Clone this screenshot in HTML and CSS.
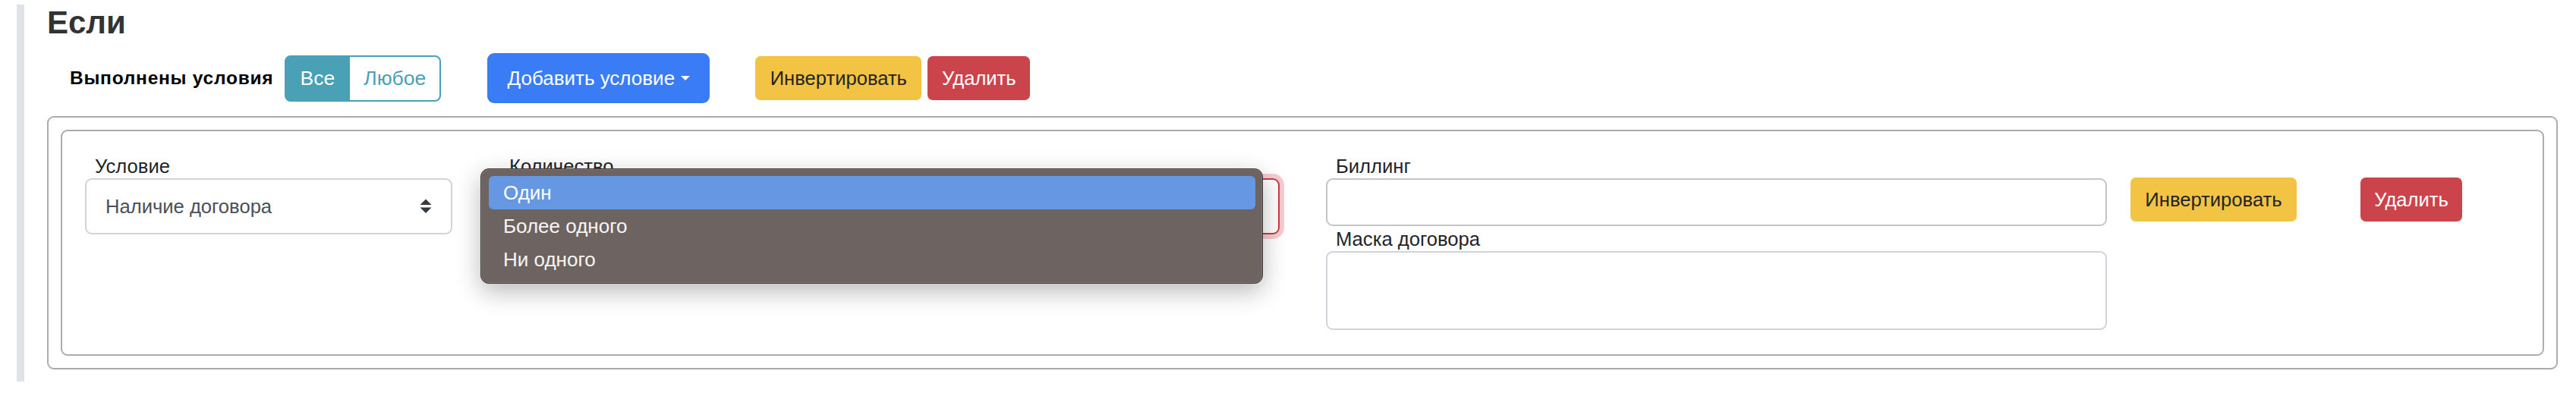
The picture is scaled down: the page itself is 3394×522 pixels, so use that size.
FILE: index.html
```html
<!DOCTYPE html>
<html lang="ru">
<head>
<meta charset="utf-8">
<title>Если</title>
<link rel="stylesheet" href="styles.css">
</head>
<body>
<section class="block">
  <h3 class="title">Если</h3>
  <div class="toolbar">
    <span class="cond-label">Выполнены условия</span>
    <div class="btn-group">
      <button class="btn seg seg-active">Все</button>
      <button class="btn seg seg-outline">Любое</button>
    </div>
    <button class="btn btn-add">Добавить условие<span class="caret"></span></button>
    <button class="btn btn-warn btn-invert top-invert">Инвертировать</button>
    <button class="btn btn-danger btn-delete top-delete">Удалить</button>
  </div>
  <div class="outer-box">
    <div class="inner-box">
      <div class="field col-cond">
        <label class="lbl">Условие</label>
        <div class="select">
          <span class="select-text">Наличие договора</span>
          <svg class="select-arrows" width="16" height="20" viewBox="0 0 16 20"><polygon points="8,0.5 15.5,8 0.5,8" fill="#343a40"/><polygon points="0.5,11.5 15.5,11.5 8,19" fill="#343a40"/></svg>
        </div>
      </div>
      <div class="field col-count">
        <label class="lbl">Количество</label>
        <div class="select select-invalid"></div>
        <div class="popup">
          <div class="popup-item popup-active">Один</div>
          <div class="popup-item">Более одного</div>
          <div class="popup-item">Ни одного</div>
        </div>
      </div>
      <div class="field col-bill">
        <label class="lbl">Биллинг</label>
        <div class="input"></div>
        <label class="lbl lbl-second">Маска договора</label>
        <div class="textarea"></div>
      </div>
      <button class="btn btn-warn btn-invert row-invert">Инвертировать</button>
      <button class="btn btn-danger btn-delete row-delete">Удалить</button>
    </div>
  </div>
</section>
</body>
</html>
```

FILE: styles.css
```css
* { box-sizing: border-box; }

html, body {
  margin: 0;
  padding: 0;
  background: #ffffff;
  font-family: "Liberation Sans", Arial, Helvetica, sans-serif;
  color: #212529;
}

.block {
  margin: 6px 24px 0 22px;
  border-left: 10px solid #dfe2e6;
  padding: 0 0 16px 30px;
}

.title {
  margin: 0;
  font-size: 42px;
  line-height: 48px;
  font-weight: bold;
  color: #333333;
}

.toolbar {
  display: flex;
  align-items: center;
  height: 66px;
  margin-top: 16px;
  margin-bottom: 17px;
}

.cond-label {
  margin-left: 30px;
  font-size: 24.5px;
  font-weight: bold;
  letter-spacing: 0.75px;
  color: #000000;
}

.btn {
  font-family: "Liberation Sans", Arial, Helvetica, sans-serif;
  display: flex;
  align-items: center;
  justify-content: center;
  border: 0;
  margin: 0;
  padding: 0;
  cursor: pointer;
  white-space: nowrap;
}

.btn-group {
  display: flex;
  margin-left: 15px;
  height: 61px;
}

.seg {
  height: 61px;
  font-size: 26.5px;
}

.seg-active {
  width: 86px;
  background: #4aa1b6;
  color: #ffffff;
  border: 2px solid #4aa1b6;
  border-radius: 8px 0 0 8px;
}

.seg-outline {
  width: 120px;
  background: #ffffff;
  color: #4aa1b6;
  border: 2px solid #4aa1b6;
  border-left: 0;
  border-radius: 0 8px 8px 0;
}

.btn-add {
  margin-left: 61px;
  width: 293px;
  height: 66px;
  background: #3a7cf6;
  color: #ffffff;
  font-size: 26px;
  border-radius: 9px;
}

.caret {
  display: inline-block;
  margin-left: 8px;
  width: 0;
  height: 0;
  border-top: 6px solid #ffffff;
  border-left: 6.5px solid transparent;
  border-right: 6.5px solid transparent;
}

.btn-warn {
  background: #f3c343;
  color: #212529;
}

.btn-danger {
  background: #cc444b;
  color: #ffffff;
}

.btn-invert {
  width: 219px;
  height: 58px;
  font-size: 25.6px;
  border-radius: 7px;
}

.btn-delete {
  width: 135px;
  height: 58px;
  font-size: 25.6px;
  border-radius: 7px;
}

.top-invert { margin-left: 60px; }
.top-delete { margin-left: 8px; }

.outer-box {
  border: 2px solid #acacac;
  border-radius: 9px;
  padding: 16px;
}

.inner-box {
  display: flex;
  align-items: flex-start;
  border: 2px solid #acacac;
  border-radius: 9px;
  padding: 31px 0 32px 30px;
}

.field {
  display: flex;
  flex-direction: column;
  position: relative;
}

.col-cond { width: 484px; }
.col-count { width: 1028px; margin-left: 62px; }
.col-bill { width: 1029px; margin-left: 61px; }

.lbl {
  display: block;
  font-size: 25.6px;
  line-height: 30px;
  height: 30px;
  padding-left: 13px;
  margin-bottom: 1px;
  color: #212529;
}

.lbl-second { margin-top: 2px; }

.select {
  height: 74px;
  border: 2px solid #ced4da;
  border-radius: 9px;
  display: flex;
  align-items: center;
  justify-content: space-between;
  padding: 0 25px 0 25px;
  background: #ffffff;
}

.select-text {
  font-size: 25.6px;
  color: #495057;
}

.select-arrows { display: block; }

.select-invalid {
  border-color: #cc3a43;
  box-shadow: 0 0 0 6px rgba(220, 53, 69, 0.25);
}

.input {
  height: 63px;
  border: 2px solid #c4c4c4;
  border-radius: 9px;
}

.textarea {
  height: 104px;
  border: 2px solid #ced4da;
  border-radius: 9px;
}

.row-invert { margin-left: 31px; margin-top: 30px; }
.row-delete { margin-left: 84px; margin-top: 30px; width: 134px; }

.popup {
  position: absolute;
  left: -25px;
  top: 18px;
  width: 1031px;
  height: 152px;
  background: #6d6462;
  border: 1.5px solid #3e3a39;
  border-radius: 11px;
  padding: 9px 9px 9px 10px;
  box-shadow: 0 10px 32px rgba(0, 0, 0, 0.28), 0 0 0 1px rgba(255, 255, 255, 0.12) inset;
  z-index: 5;
}

.popup-item {
  height: 44px;
  line-height: 44px;
  font-size: 26px;
  padding-left: 19px;
  color: #f6f6f6;
  border-radius: 6px;
}

.popup-active {
  background: #6597e2;
  color: #ffffff;
}
```
